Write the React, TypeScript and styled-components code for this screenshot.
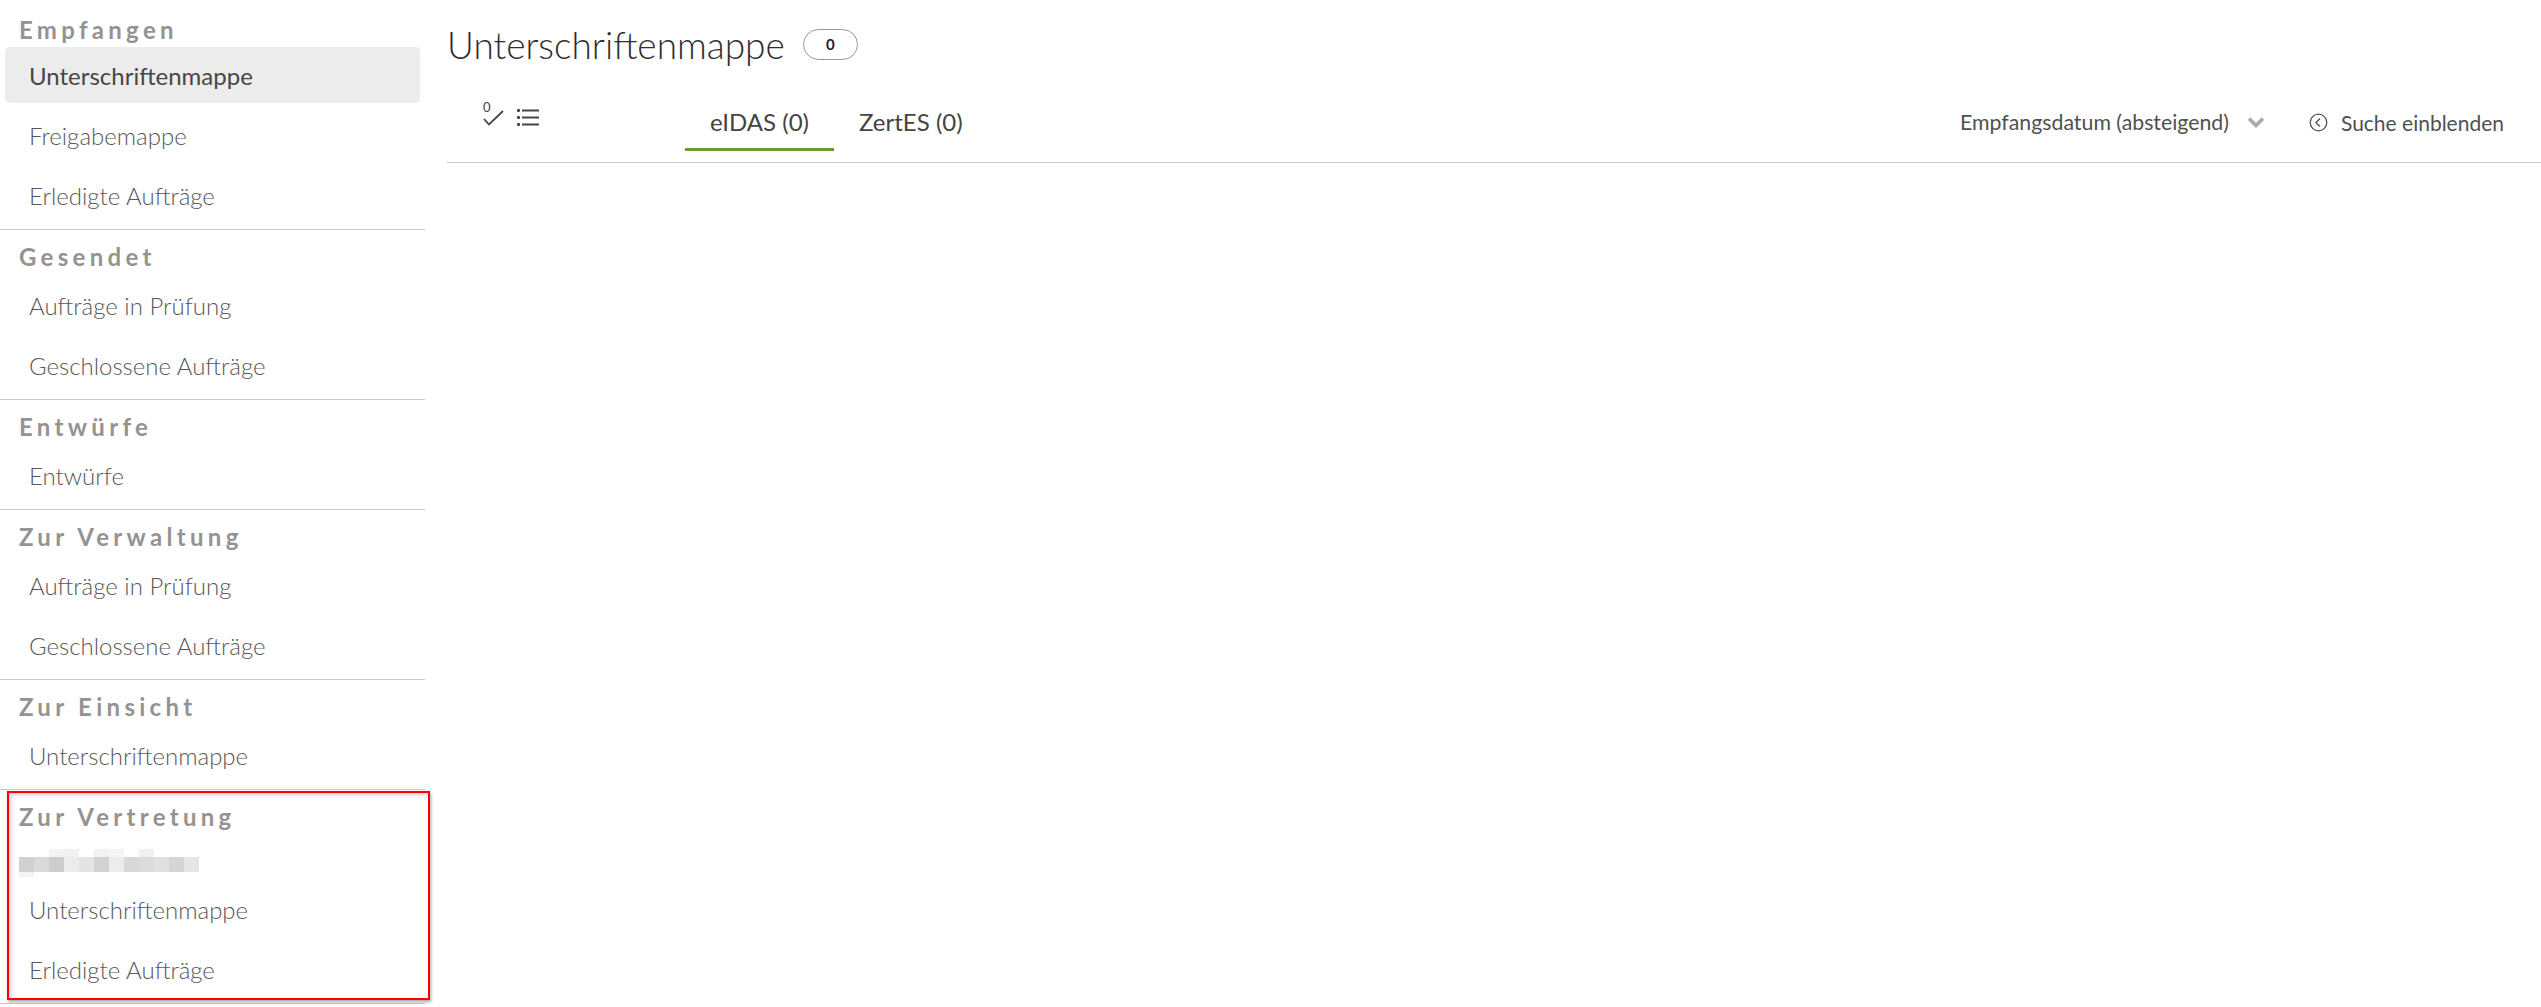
import React from "react";
import styled, { createGlobalStyle } from "styled-components";

const GlobalStyle = createGlobalStyle`
  html, body { margin: 0; padding: 0; background: #fff; }
  body { font-family: Lato, "Open Sans", "Liberation Sans", sans-serif; }
  * { box-sizing: border-box; }
`;

const Page = styled.div`
  display: flex;
  align-items: flex-start;
  width: 100%;
  min-height: 1007px;
`;

const Sidebar = styled.nav`
  width: 425px;
  flex: 0 0 425px;
  display: flex;
  flex-direction: column;
`;

const SectionTitle = styled.div`
  padding: 12px 0 3px 19px;
  font-size: 24px;
  line-height: 30px;
  font-weight: 700;
  letter-spacing: 4.3px;
  color: #959391;
`;

const Section = styled.section<{ $highlight?: boolean }>`
  position: relative;
  padding-bottom: 4px;
  border-bottom: 1px solid #c9c9c9;
  display: flex;
  flex-direction: column;

  &:first-child ${SectionTitle} {
    padding-top: 15px;
    padding-bottom: 0;
  }

  ${(p) =>
    p.$highlight &&
    `
    &::after {
      content: "";
      position: absolute;
      top: 1px;
      left: 7px;
      right: -5px;
      bottom: 3px;
      border: 2px solid #ff0000;
      box-shadow: 1px 2px 3px rgba(0,0,0,0.35), inset 2px 2px 3px rgba(0,0,0,0.18);
      pointer-events: none;
    }
  `}
`;

const NavItem = styled.a<{ $active?: boolean }>`
  display: block;
  height: 56px;
  margin: 2px 5px;
  padding-left: 24px;
  border-radius: 5px;
  font-size: 24px;
  line-height: 58px;
  font-weight: ${(p) => (p.$active ? 400 : 300)};
  color: ${(p) => (p.$active ? "#474747" : "#585858")};
  background: ${(p) => (p.$active ? "#ececec" : "transparent")};
  text-decoration: none;
  overflow: hidden;
  cursor: pointer;
`;

const RedactedName = styled.div`
  height: 44px;
  padding: 14px 0 0 19px;
`;

const Main = styled.main`
  flex: 1;
  padding-left: 22px;
  display: flex;
  flex-direction: column;
`;

const TitleRow = styled.div`
  height: 88px;
  display: flex;
  align-items: center;
`;

const Title = styled.h1`
  margin: 0;
  padding-top: 2px;
  font-size: 37px;
  line-height: 42px;
  font-weight: 300;
  color: #2e2e2e;
`;

const CountBadge = styled.span`
  margin-left: 18px;
  width: 55px;
  height: 31px;
  border: 1px solid #9a9a90;
  border-radius: 16px;
  display: inline-flex;
  align-items: center;
  justify-content: center;
  font-size: 15px;
  font-weight: 700;
  color: #222;
`;

const Toolbar = styled.div`
  height: 75px;
  padding-top: 19px;
  display: flex;
  align-items: flex-start;
  border-bottom: 1px solid #c9c9c9;
`;

const IconGroup = styled.div`
  margin-left: 35px;
  height: 30px;
  display: flex;
  align-items: center;
  gap: 11px;
  padding-bottom: 10px;
`;

const CheckIcon = styled.span`
  position: relative;
  width: 24px;
  height: 24px;
  display: inline-block;
`;

const CheckCount = styled.span`
  position: absolute;
  left: 1px;
  top: -4px;
  font-size: 13px;
  line-height: 13px;
  color: #444;
`;

const Tabs = styled.div`
  margin-left: 145px;
  display: flex;
`;

const Tab = styled.button<{ $active?: boolean }>`
  border: none;
  background: none;
  padding: 0 25px 11px;
  font-family: inherit;
  font-size: 24px;
  line-height: 30px;
  font-weight: 400;
  color: #444;
  border-bottom: 3px solid ${(p) => (p.$active ? "#6c9a2b" : "transparent")};
  cursor: pointer;
`;

const RightTools = styled.div`
  margin-left: auto;
  padding-right: 37px;
  display: flex;
  align-items: center;
  height: 30px;
`;

const SortSelect = styled.div`
  display: flex;
  align-items: center;
  gap: 18px;
  font-size: 21.3px;
  color: #505050;
`;

const SearchToggle = styled.div`
  margin-left: 44px;
  display: flex;
  align-items: center;
  gap: 13px;
  font-size: 21px;
  color: #505050;
`;

const Content = styled.div`
  flex: 1;
`;

const pixels: { x: number; y: number; w: number; h: number; c: string }[] = [
  { x: 30, y: 0, w: 15, h: 8, c: "#f4f4f4" },
  { x: 45, y: 0, w: 15, h: 8, c: "#f1f1f1" },
  { x: 75, y: 0, w: 15, h: 8, c: "#f2f2f2" },
  { x: 90, y: 0, w: 15, h: 8, c: "#f5f5f5" },
  { x: 120, y: 0, w: 15, h: 8, c: "#f1f1f1" },
  { x: 0, y: 8, w: 15, h: 15, c: "#d0d0d0" },
  { x: 15, y: 8, w: 15, h: 15, c: "#dadada" },
  { x: 30, y: 8, w: 15, h: 15, c: "#cdcdcd" },
  { x: 45, y: 8, w: 15, h: 15, c: "#ececec" },
  { x: 60, y: 8, w: 15, h: 15, c: "#e4e4e4" },
  { x: 75, y: 8, w: 15, h: 15, c: "#d2d2d2" },
  { x: 90, y: 8, w: 15, h: 15, c: "#ececec" },
  { x: 105, y: 8, w: 15, h: 15, c: "#d8d8d8" },
  { x: 120, y: 8, w: 15, h: 15, c: "#dcdcdc" },
  { x: 135, y: 8, w: 15, h: 15, c: "#e1e0df" },
  { x: 150, y: 8, w: 15, h: 15, c: "#d4d5d8" },
  { x: 165, y: 8, w: 15, h: 15, c: "#e6e6e8" },
  { x: 0, y: 23, w: 15, h: 5, c: "#f3f3f3" },
];

function Redacted() {
  return (
    <svg width="180" height="28" viewBox="0 0 180 28" aria-hidden>
      {pixels.map((p, i) => (
        <rect key={i} x={p.x} y={p.y} width={p.w} height={p.h} fill={p.c} />
      ))}
    </svg>
  );
}

function ListIcon() {
  return (
    <svg width="23" height="18" viewBox="0 0 23 18" aria-hidden>
      <g fill="#444">
        <rect x="0" y="1" width="3" height="3" rx="1" />
        <rect x="0" y="8" width="3" height="3" rx="1" />
        <rect x="0" y="15" width="3" height="3" rx="1" />
      </g>
      <g stroke="#444" strokeWidth="2">
        <line x1="5" y1="2.5" x2="22" y2="2.5" />
        <line x1="5" y1="9.5" x2="22" y2="9.5" />
        <line x1="5" y1="16.5" x2="22" y2="16.5" />
      </g>
    </svg>
  );
}

function Check() {
  return (
    <CheckIcon>
      <CheckCount>0</CheckCount>
      <svg width="24" height="24" viewBox="0 0 24 24" aria-hidden style={{ position: "absolute", left: 0, top: 0 }}>
        <polyline points="2,14 7,19.5 21,6" fill="none" stroke="#444" strokeWidth="1.8" />
      </svg>
    </CheckIcon>
  );
}

function ChevronDown() {
  return (
    <svg width="18" height="12" viewBox="0 0 18 12" aria-hidden>
      <polyline points="2,2.5 9,9.5 16,2.5" fill="none" stroke="#a9a9a9" strokeWidth="3.6" />
    </svg>
  );
}

function CircleLeft() {
  return (
    <svg width="19" height="19" viewBox="0 0 19 19" aria-hidden>
      <circle cx="9.5" cy="9.5" r="8.3" fill="none" stroke="#555" strokeWidth="1.3" />
      <polyline points="11,5.5 7,9.5 11,13.5" fill="none" stroke="#555" strokeWidth="1.4" />
    </svg>
  );
}

const sections: { title: string; items: string[]; active?: number }[] = [
  { title: "Empfangen", items: ["Unterschriftenmappe", "Freigabemappe", "Erledigte Aufträge"], active: 0 },
  { title: "Gesendet", items: ["Aufträge in Prüfung", "Geschlossene Aufträge"] },
  { title: "Entwürfe", items: ["Entwürfe"] },
  { title: "Zur Verwaltung", items: ["Aufträge in Prüfung", "Geschlossene Aufträge"] },
  { title: "Zur Einsicht", items: ["Unterschriftenmappe"] },
];

export default function App() {
  return (
    <>
      <GlobalStyle />
      <Page>
        <Sidebar>
          {sections.map((s) => (
            <Section key={s.title}>
              <SectionTitle>{s.title}</SectionTitle>
              {s.items.map((it, i) => (
                <NavItem key={it} $active={s.active === i}>
                  {it}
                </NavItem>
              ))}
            </Section>
          ))}
          <Section $highlight>
            <SectionTitle>Zur Vertretung</SectionTitle>
            <RedactedName>
              <Redacted />
            </RedactedName>
            <NavItem>Unterschriftenmappe</NavItem>
            <NavItem>Erledigte Aufträge</NavItem>
          </Section>
        </Sidebar>
        <Main>
          <TitleRow>
            <Title>Unterschriftenmappe</Title>
            <CountBadge>0</CountBadge>
          </TitleRow>
          <Toolbar>
            <IconGroup>
              <Check />
              <ListIcon />
            </IconGroup>
            <Tabs>
              <Tab $active>eIDAS (0)</Tab>
              <Tab>ZertES (0)</Tab>
            </Tabs>
            <RightTools>
              <SortSelect>
                <span>Empfangsdatum (absteigend)</span>
                <ChevronDown />
              </SortSelect>
              <SearchToggle>
                <CircleLeft />
                <span>Suche einblenden</span>
              </SearchToggle>
            </RightTools>
          </Toolbar>
          <Content />
        </Main>
      </Page>
    </>
  );
}
